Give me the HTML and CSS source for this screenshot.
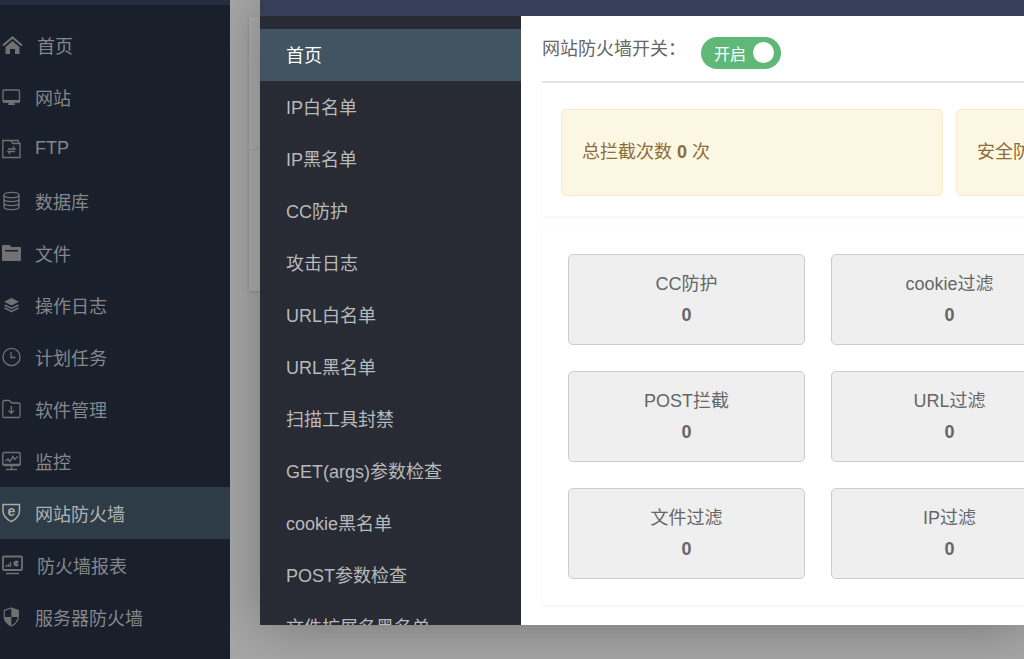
FILE: index.html
```html
<!DOCTYPE html>
<html lang="zh-CN">
  <head>
    <meta charset="utf-8">
    <title>网站防火墙</title>
    <link rel="stylesheet" href="styles.css">
  </head>

<body>
  <div class="topbar"></div>

  <div class="page">
    <nav class="sidebar">
      <a href="#">
        <svg width="21" height="20" viewBox="0 0 21 20"><path d="M1 10.5L10.500 2.500 20 10.500" fill="none" stroke="currentColor" stroke-width="2.200"/><path d="M3.500 12L10.500 6l7 6v7h-4.500v-5h-5v5H3.500z" fill="currentColor"/></svg>
        首页
      </a>
      <a href="#">
        <svg width="19" height="20" viewBox="0 0 19 20"><rect x="1" y="3" width="16.500" height="12" rx="1" fill="none" stroke="currentColor" stroke-width="1.300"/><path d="M1 13h17v2.500H1zM7 15h5l1 3H6z" fill="currentColor"/></svg>
        网站
      </a>
      <a href="#">
        <svg width="19" height="20" viewBox="0 0 19 20" fill="none" stroke="currentColor" stroke-width="1.300"><path d="M.8 1.500h8l2 3h7.200v14H.8z"/><path d="M9 1.500h7l1 3M6 10h7l-2-2.500M13 12.500H6l2 2.500"/></svg>
        FTP
      </a>
      <a href="#">
        <svg width="19" height="20" viewBox="0 0 19 20" fill="none" stroke="currentColor" stroke-width="1.300"><ellipse cx="9.500" cy="4" rx="7.500" ry="2.700"/><path d="M2 4v12c0 3.500 15 3.500 15 0V4M2 8c0 3.500 15 3.500 15 0M2 12c0 3.500 15 3.500 15 0"/></svg>
        数据库
      </a>
      <a href="#">
        <svg width="19" height="20" viewBox="0 0 19 20"><path fill="currentColor" fill-rule="evenodd" d="M0 3q0-1 1-1h6.500l2 2H18q1 0 1 1v12q0 1-1 1H1q-1 0-1-1zM3 7v1.500h13V7z"/></svg>
        文件
      </a>
      <a href="#">
        <svg width="19" height="20" viewBox="0 0 19 20"><path d="M9.500 3l7.500 3.700-7.500 3.800L2 6.700z" fill="currentColor"/><path d="M2.500 10l7 3.500 7-3.500M2.500 13l7 3.500 7-3.500" fill="none" stroke="currentColor" stroke-width="1.400"/></svg>
        操作日志
      </a>
      <a href="#">
        <svg width="19" height="20" viewBox="0 0 19 20" fill="none" stroke="currentColor" stroke-width="1.300"><circle cx="9.500" cy="10" r="8.600"/><path d="M9 5v5.500h4.500"/></svg>
        计划任务
      </a>
      <a href="#">
        <svg width="19" height="20" viewBox="0 0 19 20" fill="none" stroke="currentColor" stroke-width="1.300"><path d="M.8 3q0-1.500 1.500-1.500h5l2.500 2.500h6.700q1.500 0 1.500 1.500v11.500q0 1.500-1.500 1.500H2.300q-1.500 0-1.500-1.500z"/><path d="M9.300 7v7M6.500 11.500l2.800 2.800 2.800-2.800"/></svg>
        软件管理
      </a>
      <a href="#">
        <svg width="19" height="20" viewBox="0 0 19 20" fill="none" stroke="currentColor" stroke-width="1.400"><rect x=".8" y="1.500" width="17.400" height="13" rx="1.500"/><path d="M3.500 10l2.500-2 2 2.500 3-5 1.500 3 3.500-3M1 13.500h17M9.500 14v4M4 18.500h11"/></svg>
        监控
      </a>
      <a href="#" class="active">
        <svg width="19" height="20" viewBox="0 0 19 20"><path d="M1 1.500h16.500v6q0 7-8.200 11.200Q1 14.500 1 7.500z" fill="none" stroke="currentColor" stroke-width="1.500"/><text x="9.300" y="13" text-anchor="middle" font-size="14" font-weight="bold" fill="currentColor">e</text></svg>
        网站防火墙
      </a>
      <a href="#">
        <svg width="21" height="20" viewBox="0 0 21 20"><rect x="1" y="1.500" width="19" height="13.500" rx="1" fill="none" stroke="currentColor" stroke-width="1.800"/><path d="M4 18.500h13M4.500 12v-2M6.500 12V9M8.500 12V7" stroke="currentColor" stroke-width="1.400"/><path d="M17 9.800a3 3 0 1 1 0-2.600l-2.500 1.300z" fill="currentColor"/></svg>
        防火墙报表
      </a>
      <a href="#">
        <svg width="19" height="20" viewBox="0 0 19 20"><path d="M9.300 1l7 2.500v6q0 6-7 9.500-7-3.500-7-9.500v-6z" fill="none" stroke="currentColor" stroke-width="1.200"/><path d="M9.300 1l7 2.500V10h-7zM2.300 10h7v9q-6-3-7-9z" fill="currentColor"/></svg>
        服务器防火墙
      </a>
    </nav>

    <div class="content">
      <div class="panel">
        <div class="panel-head"></div>
      </div>
    </div>
  </div>

  <div class="modal">
    <div class="modal-head"></div>
    <div class="modal-body">
      <nav class="menu">
        <a href="#" class="active">首页</a>
        <a href="#">IP白名单</a>
        <a href="#">IP黑名单</a>
        <a href="#">CC防护</a>
        <a href="#">攻击日志</a>
        <a href="#">URL白名单</a>
        <a href="#">URL黑名单</a>
        <a href="#">扫描工具封禁</a>
        <a href="#">GET(args)参数检查</a>
        <a href="#">cookie黑名单</a>
        <a href="#">POST参数检查</a>
        <a href="#">文件扩展名黑名单</a>
      </nav>

      <div class="main">
        <div class="switch-row">
          <label for="waf" class="switch-title">网站防火墙开关：</label>
          <label class="switch">
            <span>开启</span>
            <input type="checkbox" id="waf" checked>
          </label>
        </div>

        <div class="card totals">
          <div class="alert">总拦截次数 <b>0</b> 次</div>
          <div class="alert">安全防</div>
        </div>

        <div class="card tiles">
          <div class="tile">CC防护<b>0</b></div>
          <div class="tile">cookie过滤<b>0</b></div>
          <div class="tile">POST拦截<b>0</b></div>
          <div class="tile">URL过滤<b>0</b></div>
          <div class="tile">文件过滤<b>0</b></div>
          <div class="tile">IP过滤<b>0</b></div>
        </div>
      </div>
    </div>
  </div>
</body>
</html>
```
FILE: styles.css
```css
*{
  box-sizing: border-box;
}
body{
  margin: 0;
  height: 100vh;
  display: flex;
  flex-direction: column;
  overflow: hidden;
  background-color: #a6a6a6;
  color: #666;
  font-family: "Liberation Sans", "Noto Sans CJK SC", sans-serif;
  font-size: 18px;
}
a{
  text-decoration: none;
}

/* page behind the dialog */
.topbar{
  width: 230px;
  height: 5px;
  background-color: #252e40;
}
.page{
  flex: 1;
  display: flex;
}
.topbar, .sidebar{
  position: relative;
  z-index: 1;
}
.sidebar{
  width: 230px;
  padding-top: 14px;
  background-color: #191f2b;
}
.sidebar a{
  display: flex;
  align-items: center;
  gap: 14px;
  height: 52px;
  padding: 0 0 1px 2px;
  color: #85878b;
}
.sidebar svg{
  color: #707173;
}
.sidebar .active{
  background-color: #2d3c47;
  color: #b0b3b5;
}
.sidebar .active svg{
  color: #a8abad;
}
.content{
  flex: 1;
  padding: 12px 19px;
}
.panel{
  height: 274px;
  background-color: #acacac;
  box-shadow: 0 1px 3px rgba(0,0,0,.15);
}
.panel-head{
  height: 133px;
  border-bottom: 1px solid #a0a0a0;
}

/* dialog */
.modal{
  position: absolute;
  top: 0;
  right: 0;
  bottom: 34px;
  left: 260px;
  display: flex;
  flex-direction: column;
  background-color: #fff;
  box-shadow: 1px 1px 50px rgba(0,0,0,.3);
}
.modal-head{
  height: 16px;
  background-color: #353f58;
}
.modal-body{
  flex: 1;
  min-height: 0;
  display: flex;
}
.menu{
  flex: 0 0 261px;
  padding-top: 13px;
  overflow: hidden;
  background-color: #282b33;
}
.menu a{
  display: block;
  height: 52px;
  line-height: 54px;
  padding-left: 26px;
  color: #b8b9bb;
}
.menu .active{
  background-color: #425462;
  color: #fff;
}
.main{
  flex: 1;
  min-width: 0;
  padding-left: 21px;
  overflow: hidden;
}
.switch-row{
  display: flex;
  align-items: center;
  gap: 15px;
  height: 67px;
  padding-top: 8px;
  border-bottom: 2px solid #e6e6e6;
}
.switch-title{
  padding-bottom: 12px;
}
.switch{
  display: flex;
  align-items: center;
  justify-content: space-between;
  width: 80px;
  height: 32px;
  padding: 0 7px 0 13px;
  border-radius: 16px;
  background-color: #5fb878;
  color: #fff;
  font-size: 16px;
}
.switch input{
  appearance: none;
  margin: 0;
  width: 21px;
  height: 21px;
  border-radius: 50%;
  background-color: #fff;
}
.card{
  box-shadow: 0 1px 3px rgba(0,0,0,.06);
}
.totals{
  display: flex;
  gap: 13px;
  padding: 26px 19px 20px;
  margin-bottom: 12px;
}
.alert{
  flex: 0 0 382px;
  padding: 20px;
  line-height: 45px;
  border: 1px solid #faebcc;
  border-radius: 5px;
  background-color: #fcf7e2;
  color: #8a6d3b;
}
.tiles{
  display: grid;
  grid-template-columns: 237px 237px;
  gap: 26px;
  padding: 26px;
}
.tile{
  padding: 14px 0 13px;
  line-height: 31px;
  text-align: center;
  border: 1px solid #ccc;
  border-radius: 5px;
  background-color: #efefef;
}
.tile b{
  display: block;
}
```
